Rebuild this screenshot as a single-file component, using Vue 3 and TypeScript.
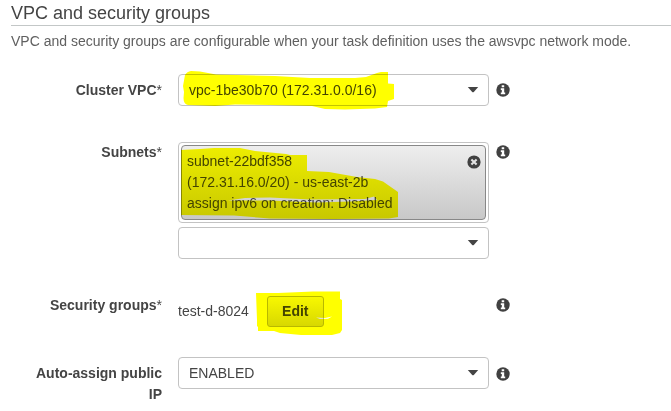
<script setup lang="ts">
import { h, type FunctionalComponent } from 'vue'

interface Subnet {
  id: string
  cidr: string
  ipv6: string
}

const subnet: Subnet = {
  id: 'subnet-22bdf358',
  cidr: '(172.31.16.0/20) - us-east-2b',
  ipv6: 'assign ipv6 on creation: Disabled',
}

const InfoIcon: FunctionalComponent = () =>
  h('svg', { viewBox: '0 0 14 14', width: 14, height: 14 }, [
    h('circle', { cx: 7, cy: 7, r: 6.7, fill: '#414141' }),
    h('path', { d: 'M5.7 2.3h2.5v2H5.7zM4.8 5.3h3.4v4.2h1v1.7H4.8V9.5h1V7h-1z', fill: '#fff' }),
  ])

const Caret: FunctionalComponent = () =>
  h('svg', { viewBox: '0 0 12 6', width: 12, height: 6 }, [
    h('path', { d: 'M.8 0h10.4L6.8 4.9q-.8.7-1.6 0z', fill: '#444' }),
  ])
</script>

<template>
  <main class="panel">
    <h2 class="title">VPC and security groups</h2>
    <p class="description">
      VPC and security groups are configurable when your task definition uses the awsvpc network mode.
    </p>

    <div class="row row-vpc">
      <div class="label"><b>Cluster VPC</b>*</div>
      <div class="select"><span class="vpc-value">vpc-1be30b70 (172.31.0.0/16)</span><Caret /></div>
      <InfoIcon class="info" />
    </div>

    <div class="row row-subnets">
      <div class="label"><b>Subnets</b>*</div>
      <div class="stack">
        <div class="chips">
          <div class="chip">
            <div class="chip-text">
              <div class="subnet-id">{{ subnet.id }}</div>
              <div class="subnet-cidr">{{ subnet.cidr }}</div>
              <div class="subnet-ipv6">{{ subnet.ipv6 }}</div>
            </div>
            <svg class="remove" viewBox="0 0 14 14" width="14" height="14">
              <circle cx="7" cy="7" r="6.6" fill="#414141" />
              <path d="M4.4 4.4l5.2 5.2M9.6 4.4L4.4 9.6" stroke="#e2e2e2" stroke-width="2.1" />
            </svg>
          </div>
        </div>
        <div class="select"><span></span><Caret /></div>
      </div>
      <InfoIcon class="info" />
    </div>

    <div class="row row-groups">
      <div class="label"><b>Security groups</b>*</div>
      <div class="groups">
        <span class="group-name">test-d-8024</span>
        <button class="edit" type="button">Edit</button>
      </div>
      <InfoIcon class="info" />
    </div>

    <div class="row row-ip">
      <div class="label"><b>Auto-assign public IP</b></div>
      <div class="select"><span class="enabled">ENABLED</span><Caret /></div>
      <InfoIcon class="info" />
    </div>

    <svg class="marker" viewBox="0 0 671 411" width="671" height="411">
      <path d="M185 75Q187 71.500 191 71L200 71.500L216 74.500L275 76L310 78L355 78L366 77L377 73L381 72H388V83.500L394 84V99L388 101L387 107L375 108.500L345 109.500L325 109L312 106L270 105L235 104.500L215 106L188 105Q183.500 104 183.500 98L184 92L183 86Z" />
      <path d="M181 150L200 149L214 148H240L255 151L286 154L290 155H307V171L329 172L357 177L375 179L383 181.500L398 192V217L389 218.500L333 219L270 218.500L234 215.500L181 215V178Z
        M228 200.500L245 198L270 197.500L310 199.500L365 199L374 196.500L377 200L350 201.500L317 202.500L270 200.500Z" fill-rule="evenodd" />
      <path d="M256 293H278L313 291.500H340V299L342 300V330L340 333L332 335H301L280 333L274 331H258V327L257 326V320Z
        M316 317.500L325 318L332 316.500L328 318.800L320 319Z" fill-rule="evenodd" />
    </svg>
  </main>
</template>

<style>
body {
  background: #fff;
}
</style>

<style scoped>
.panel {
  position: relative;
  box-sizing: border-box;
  width: 671px;
  height: 411px;
  padding-left: 11px;
  overflow: hidden;
  background: #fff;
  color: #444;
  font: 14px/21px "Liberation Sans", Arial, sans-serif;
}
.title {
  box-sizing: border-box;
  height: 26px;
  margin: 0;
  border-bottom: 1px solid #c3c7c7;
  font-size: 18px;
  font-weight: 400;
  line-height: 26px;
}
.description {
  margin: 5px 0 0;
  color: #606060;
  line-height: 20px;
  white-space: nowrap;
}
.row {
  display: grid;
  grid-template-columns: 151px 311px 14px;
  column-gap: 16px;
  align-items: start;
}
.row > .info {
  margin-left: -9px;
}
.row-vpc { margin-top: 23px; }
.row-subnets { margin-top: 36px; }
.row-groups { margin-top: 35px; }
.row-ip { margin-top: 30px; }
.label {
  padding-top: 6px;
  padding-left: 20px;
  text-align: right;
}
.row-subnets .label { padding-top: 0; }
.row-groups .label { padding-top: 1px; }
.info { margin-top: 9px; }
.row-subnets .info { margin-top: 3px; }
.row-groups .info { margin-top: 4px; }
.row-ip .info { margin-top: 10px; }
.select {
  display: flex;
  align-items: center;
  justify-content: space-between;
  box-sizing: border-box;
  height: 32px;
  padding: 0 9px 0 10px;
  border: 1px solid #c3c3c3;
  border-radius: 4px;
}
.stack {
  display: grid;
  gap: 4px;
}
.chips {
  box-sizing: border-box;
  height: 81px;
  padding: 2px;
  border: 1px solid #c3c3c3;
  border-radius: 4px;
}
.chip {
  display: flex;
  justify-content: space-between;
  box-sizing: border-box;
  height: 75px;
  padding: 5px 4px 0 5px;
  border: 1px solid #888;
  border-radius: 4px;
  background: linear-gradient(#eee, #c8c8c8);
  white-space: nowrap;
}
.remove { margin-top: 4px; }
.groups {
  display: flex;
  align-items: center;
  gap: 18px;
  padding-top: 2px;
}
.edit {
  width: 57px;
  height: 31px;
  padding: 0 0 1px;
  border: 1px solid #b8b8a4;
  border-radius: 3px;
  background: linear-gradient(#f8f8f8, #d8d8d8);
  color: #444;
  font: bold 14px "Liberation Sans", Arial, sans-serif;
}
.marker {
  position: absolute;
  top: 0;
  left: 0;
  fill: #ff0;
  mix-blend-mode: multiply;
  pointer-events: none;
}
</style>
